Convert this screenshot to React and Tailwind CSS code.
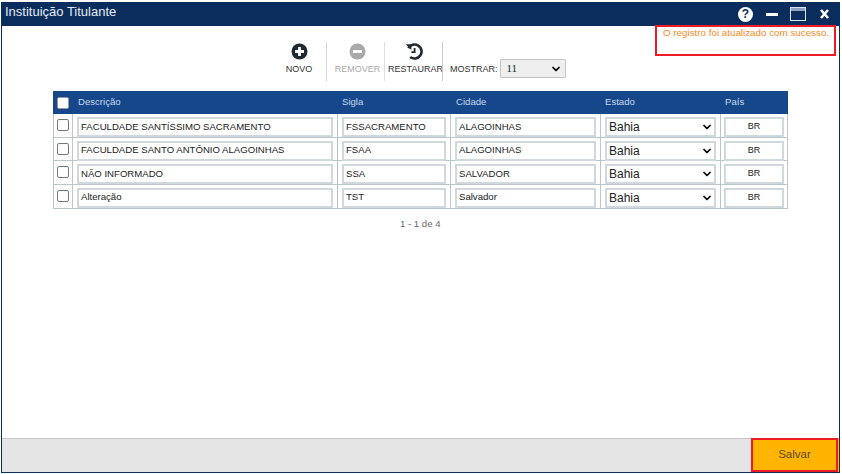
import { ChevronDown } from 'lucide-react'

const rows = [
  { descricao: 'FACULDADE SANTÍSSIMO SACRAMENTO', sigla: 'FSSACRAMENTO', cidade: 'ALAGOINHAS' },
  { descricao: 'FACULDADE SANTO ANTÔNIO ALAGOINHAS', sigla: 'FSAA', cidade: 'ALAGOINHAS' },
  { descricao: 'NÃO INFORMADO', sigla: 'SSA', cidade: 'SALVADOR' },
  { descricao: 'Alteração', sigla: 'TST', cidade: 'Salvador' },
]

const columns = 'grid grid-cols-[19px_265px_113px_150px_120px_1fr]'

function PlusCircle({ color }) {
  return (
    <svg width="17" height="17" viewBox="0 0 17 17">
      <circle cx="8.5" cy="8.5" r="8" fill={color} />
      <path d="M8.5 4v9M4 8.5h9" stroke="#fff" strokeWidth="2.8" />
    </svg>
  )
}

function MinusCircle({ color }) {
  return (
    <svg width="17" height="17" viewBox="0 0 17 17">
      <circle cx="8.5" cy="8.5" r="8" fill={color} />
      <path d="M4 8.5h9" stroke="#fff" strokeWidth="2.8" />
    </svg>
  )
}

function Restore() {
  return (
    <svg width="18" height="17" viewBox="0 0 18 17" fill="none">
      <path d="M3.4 5.2A7 7 0 1 1 5.2 14" stroke="#1f2933" strokeWidth="2.6" />
      <path d="M0.6 1.2h5.8v5.8z" fill="#1f2933" />
      <path d="M9.6 5v4.2H6.4" stroke="#1f2933" strokeWidth="1.8" />
    </svg>
  )
}

function Cell({ children, className = 'pl-[4px] pr-[4px]' }) {
  return <div className={`border-l border-[#b9c6cb] pt-[3px] flex ${className}`}>{children}</div>
}

function Field({ children, className = '' }) {
  return (
    <div className={`h-[20px] w-full border-2 border-[#cfd8dc] flex items-center text-[9.6px] text-[#222] whitespace-nowrap ${className}`}>
      {children}
    </div>
  )
}

function ToolButton({ icon, label, muted, className = '', labelClass = '' }) {
  return (
    <div className={`flex flex-col items-center h-[39px] ${className}`}>
      <div className="h-[19px] mt-px">{icon}</div>
      <span className={`mt-[2px] text-[9px] leading-[11px] whitespace-nowrap ${muted ? 'text-[#aaa]' : 'text-[#333]'} ${labelClass}`}>{label}</span>
    </div>
  )
}

export default function App() {
  return (
    <div className="relative w-[842px] h-[474px] bg-white font-['Liberation_Sans',Arial,sans-serif] overflow-hidden pt-[2px] pl-px pr-[2px] pb-[1.5px]">
      <div className="flex flex-col h-full border-l border-r border-b-[1.5px] border-[#0b2d5e]">
        {/* Title bar */}
        <header className="h-[24px] shrink-0 bg-[#0b2d5e] flex items-center justify-between pl-[3px] pr-[10px]">
          <span className="text-[13px] leading-none text-[#e6ebf2] -mt-[6px]">Instituição Titulante</span>
          <div className="flex items-center">
            <span className="w-[15px] h-[15px] rounded-full bg-white text-[#0b2d5e] text-[12px] font-bold flex items-center justify-center">?</span>
            <span className="ml-[13px] w-[12px] h-[3px] bg-white" />
            <span className="ml-[12px] w-[16px] h-[14px] border border-[#dfe6ee] bg-[#0b2d5e] flex flex-col">
              <span className="h-[3px] bg-[#8fa3bd]" />
            </span>
            <svg width="9" height="10" viewBox="0 0 9 10" className="ml-[14px]">
              <path d="M1 1l7 8M8 1L1 9" stroke="#fff" strokeWidth="2.6" />
            </svg>
          </div>
        </header>

        <main className="flex-1 min-h-0 flex flex-col">
          {/* Toolbar */}
          <div className="flex items-start h-[39px] mt-[16px] ml-[270px] shrink-0">
            <ToolButton icon={<PlusCircle color="#1f2933" />} label="NOVO" className="w-[54px]" />
            <div className="h-[39px] w-px bg-[#d5d5d5] mr-[4px]" />
            <ToolButton icon={<MinusCircle color="#a9a9a9" />} label="REMOVER" muted className="w-[53px]" />
            <div className="h-[39px] w-px bg-[#dedede]" />
            <ToolButton icon={<Restore />} label="RESTAURAR" className="w-[57px]" labelClass="ml-[4px]" />
            <div className="h-[39px] w-px bg-[#c9c9c9] mr-[7px]" />
            <div className="flex items-center mt-[17px]">
              <span className="text-[9px] text-[#333] mr-[2px] mt-[3px]">MOSTRAR:</span>
              <div className="w-[66px] h-[19px] bg-[#efefef] border border-[#c4c4c4] flex items-center justify-between pl-[6px] pr-[3px] rounded-[1px]">
                <span className="text-[11px] text-[#222] font-['Liberation_Serif',serif]">11</span>
                <ChevronDown size={12} strokeWidth={3.5} className="text-black" />
              </div>
            </div>
          </div>

          {/* Table */}
          <div className="ml-[51px] mt-[10px] w-[735px]">
            <div className={`${columns} h-[23px] bg-[#15478a] items-center text-[9.6px] text-[#c8d9ee]`}>
              <div className="flex justify-center pl-px">
                <span className="w-[12px] h-[12px] bg-white border border-[#999] rounded-[2px]" />
              </div>
              <span className="pl-[6px]">Descrição</span>
              <span className="pl-[5px]">Sigla</span>
              <span className="pl-[6px]">Cidade</span>
              <span className="pl-[5px]">Estado</span>
              <span className="pl-[5px]">País</span>
            </div>
            <div className="border-r border-b border-[#b9c6cb]">
              {rows.map(row => (
                <div key={row.sigla} className={`${columns} h-[23.5px] border-b border-[#b9c6cb] last:border-b-0`}>
                  <div className="border-l border-[#b9c6cb] flex justify-center pt-[5px]">
                    <span className="w-[12px] h-[12px] bg-white border border-[#777] rounded-[2px]" />
                  </div>
                  <Cell><Field className="pl-[2px]">{row.descricao}</Field></Cell>
                  <Cell><Field className="pl-[2px]">{row.sigla}</Field></Cell>
                  <Cell><Field className="pl-[2px]">{row.cidade}</Field></Cell>
                  <Cell>
                    <Field className="justify-between pl-[2px] pr-[1px]">
                      <span className="text-[12px]">Bahia</span>
                      <ChevronDown size={12} strokeWidth={3.5} className="text-black" />
                    </Field>
                  </Cell>
                  <Cell className="pl-[3px] pr-[3px]"><Field className="justify-center text-[9px]">BR</Field></Cell>
                </div>
              ))}
            </div>
          </div>

          <p className="mt-[8px] ml-[398px] text-[9.6px] text-[#6a6a75]">1 - 1 de 4</p>
        </main>

        {/* Footer */}
        <footer className="h-[34px] shrink-0 bg-[#e5e5e5] border-t border-[#c8c8c8] flex justify-end">
          <div className="bg-[#ffb400] pr-[1.5px] -mt-px h-[34px]">
            <button className="w-[87px] h-[34px] pl-px bg-[#ffb400] border-2 border-[#ed1c24] text-[11.5px] text-[#5c4a1a]">Salvar</button>
          </div>
        </footer>
      </div>

      {/* Success notice */}
      <div className="absolute left-[655px] top-[25px] w-[181px] h-[31px] border-2 border-[#ed1c24] pl-[6px] text-[9.8px] leading-[11px] text-[#f58a1f] whitespace-nowrap">
        O registro foi atualizado com sucesso.
      </div>
    </div>
  )
}
